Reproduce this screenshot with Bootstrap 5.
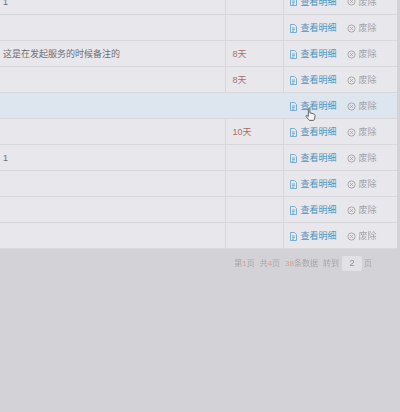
<!DOCTYPE html>
<html lang="zh">
  <head>
    <meta charset="UTF-8" />
    <meta name="viewport" content="width=device-width, initial-scale=1" />
    <title>服务列表</title>
    <link href="https://cdn.jsdelivr.net/npm/bootstrap@5.3.3/dist/css/bootstrap.min.css" rel="stylesheet" />
    <style>
      html, body { height: 100%; overflow: hidden; }
      body {
        background: #d3d2d6;
        color: #6d6d72;
        font-family: "Liberation Sans", "Noto Sans CJK SC", sans-serif;
        font-size: 9px;
      }
      .list-wrap { margin-top: -12px; filter: blur(0.35px); }
      .svc-table { table-layout: fixed; width: 397px; margin: 0; background: #e8e7ec; --bs-table-bg: #e8e7ec; --bs-table-color: #6e6e73; }
      .svc-table td { height: 26px; padding: 2px 0 0; border-bottom: 1px solid #d8d7db; vertical-align: middle; line-height: 14px; }
      .svc-table td + td { border-left: 1px solid #d8d7db; }
      .svc-table td:first-child { padding-left: 3px; }
      .svc-table tr.row-hover td { --bs-table-bg: #dde5ee; background: #dde5ee; border-left-color: #dde5ee; }
      .col-days { color: #a9705f !important; padding-left: 7px !important; }
      .col-ops { padding-left: 6px !important; }
      .op-view { color: #4c94bf; text-decoration: none; display: flex; align-items: center; gap: 4px; width: 57px; }
      .op-del { color: #a2a2a6; text-decoration: none; display: flex; align-items: center; gap: 3px; }
      .pager { height: 30px; padding-right: 28px; color: #a5a5a9; font-size: 8px; gap: 5px; }
      .pager b { color: #d99c8f; font-weight: 400; }
      .page-box { width: 20px; height: 15px; background: #e2e1e5; border-radius: 2px; text-align: center; line-height: 15px; font-size: 9px; color: #8f8f94; margin: 0 -2px 0 -1px; }
      .cursor-hand { position: absolute; left: 305px; top: 107px; }
    </style>
  </head>
  <body>
    <div class="list-wrap">
      <table class="table svc-table">
        <colgroup><col style="width: 225px" /><col style="width: 58px" /><col /></colgroup>
        <tbody id="rows"></tbody>
      </table>
      <div class="pager d-flex align-items-center justify-content-end">
        <span>第<b>1</b>页</span>
        <span>共<b>4</b>页</span>
        <span><b>38</b>条数据</span>
        <span class="d-flex align-items-center gap-1">转到<span class="page-box">2</span>页</span>
      </div>
    </div>

    <svg class="cursor-hand" width="11" height="15" viewBox="0 0 11 15">
      <path d="M3.5 1.2c.6-.6 1.4-.3 1.4.5v4.2l3.6.9c1 .3 1.6 1 1.5 2l-.5 3.4c-.1.7-.6 1.2-1.3 1.2H5c-.6 0-1-.3-1.3-.7L1 9.6c-.5-.7.4-1.5 1.1-1l1.2 1V2c0-.3 0-.6.2-.8z" fill="#f4f4f6" stroke="#55555a" stroke-width=".9" />
    </svg>

    <script>
      const data = [
        ["1", ""], ["", ""], ["这是在发起服务的时候备注的", "8天"], ["", "8天"], ["", ""],
        ["", "10天"], ["1", ""], ["", ""], ["", ""], ["", ""]
      ];
      const docIcon = `<svg width="7" height="9" viewBox="0 0 7 9" fill="none" stroke="#6aa8cf" stroke-width=".9"><path d="M.5.5h4l2 2v6h-6zM2 4h3M2 5.7h3M2 7.2h2"/></svg>`;
      const delIcon = `<svg width="9" height="9" viewBox="0 0 10 10" fill="none" stroke="#a2a2a6"><circle cx="5" cy="5" r="4"/><path d="M3.5 3.5l3 3M6.5 3.5l-3 3"/></svg>`;
      document.getElementById("rows").innerHTML = data.map((r, i) => `
        <tr class="${i === 4 ? "row-hover" : ""}">
          <td>${r[0]}</td>
          <td class="col-days">${r[1]}</td>
          <td class="col-ops"><div class="d-flex">
            <a class="op-view" href="#">${docIcon}查看明细</a>
            <a class="op-del" href="#">${delIcon}废除</a>
          </div></td>
        </tr>`).join("");
    </script>
    <script src="https://cdn.jsdelivr.net/npm/bootstrap@5.3.3/dist/js/bootstrap.bundle.min.js"></script>
  </body>
</html>
